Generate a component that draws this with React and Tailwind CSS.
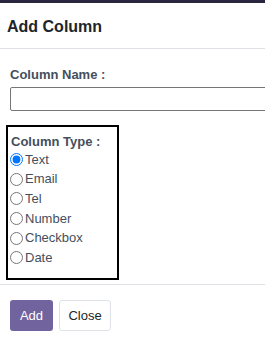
import React from "react";

export default function App() {
  const types = ["Text", "Email", "Tel", "Number", "Checkbox", "Date"];
  return (
    <div className="w-[265px] h-[340px] overflow-hidden bg-white font-['Liberation_Sans',Arial,sans-serif] relative">
      <div className="h-[3px] bg-[#2b2640]" />
      <div className="h-[46px] flex items-center px-[7px] border-b border-[#dee2e6]">
        <h4 className="text-[16px] font-bold text-[#212529] mt-[2px]">Add Column</h4>
      </div>
      <div className="pl-[10px] pt-[18px] w-[300px]">
        <label className="block text-[13px] font-bold text-[#454f5c] leading-[16px]">Column Name :</label>
        <input type="text" className="mt-[4px] block w-[290px] h-[24px] border border-[#767676] rounded-[2px] outline-none" />
      </div>
      <div className="ml-[6px] mt-[14px] w-[113px] h-[155px] border-2 border-black pl-[1px] pt-[7px]">
        <div className="text-[13px] font-bold text-[#454f5c] leading-[16px] pl-[2px]">Column Type :</div>
        <div className="flex flex-col">
          {types.map((t, i) => (
            <label key={t} className="flex items-center h-[19.6px] text-[13px] text-[#454f5c] leading-[16px]">
              <input type="radio" name="ctype" defaultChecked={i === 0} className="m-0 ml-[1px] mr-[2px] w-[13px] h-[13px]" />
              <span>{t}</span>
            </label>
          ))}
        </div>
      </div>
      <div className="mt-[4px] border-t border-[#dee2e6] pt-[15px] px-[10px] flex gap-[6px]">
        <button className="h-[31px] w-[43px] rounded-[3px] bg-[#71639e] text-white text-[13px]">Add</button>
        <button className="h-[31px] w-[52px] rounded-[3px] bg-white border border-[#dee2e6] text-[#212529] text-[13px]">Close</button>
      </div>
    </div>
  );
}
